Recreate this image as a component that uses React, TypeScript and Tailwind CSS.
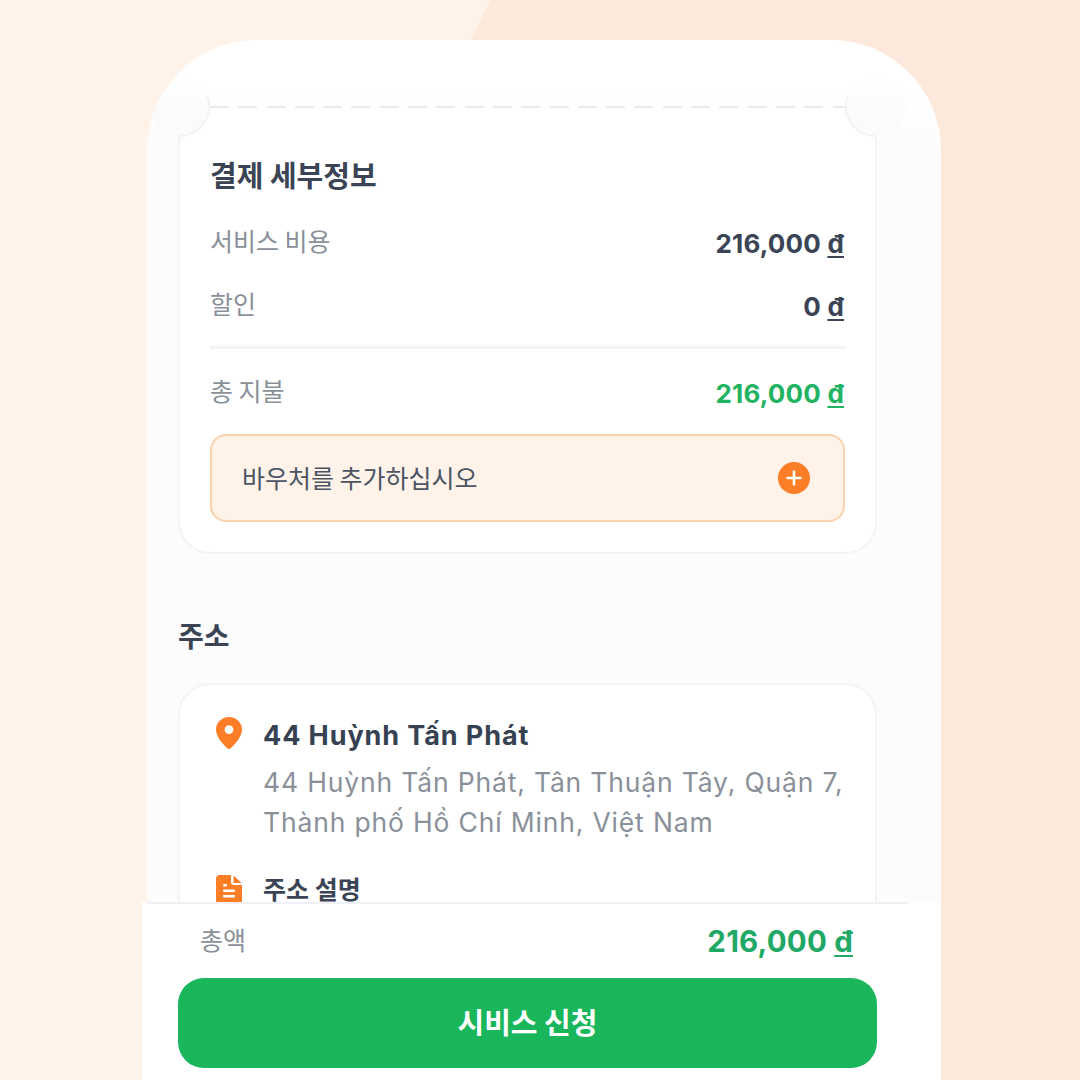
const KR = "font-['Noto_Sans_CJK_KR','Noto_Sans',sans-serif]";
const LAT = "font-['Inter','Noto_Sans_CJK_KR',sans-serif]";

function Money({ value, className }: { value: string; className: string }) {
  return (
    <span className={`${LAT} font-bold whitespace-nowrap tracking-[0.2px] ${className}`}>
      {value} <u className="underline decoration-2 underline-offset-[3px]">đ</u>
    </span>
  );
}

function Row({ label, value, color, className }: { label: string; value: string; color: string; className: string }) {
  return (
    <div className={`flex items-center justify-between ${className}`}>
      <span className="text-[25px] leading-[36px] text-[#8a9099] -translate-y-[1px]">{label}</span>
      <Money value={value} className={`text-[26px] leading-[36px] translate-y-[3px] pr-[1px] ${color}`} />
    </div>
  );
}

function Notch({ id, flip, className }: { id: string; flip: boolean; className: string }) {
  return (
    <svg viewBox="0 0 62 62" className={`absolute w-[62px] h-[62px] ${flip ? "-scale-x-100" : ""} ${className}`}>
      <defs>
        <linearGradient id={id} x1="0" y1="0" x2="0" y2="1">
          <stop offset="0" stopColor="#ffffff" />
          <stop offset="0.6" stopColor="#fafbfc" />
        </linearGradient>
      </defs>
      <circle cx="31" cy="31" r="30" fill={`url(#${id})`} />
      <path d="M59.2 20.7A30 30 0 0 1 31 61" fill="none" stroke="#f1f3f5" strokeWidth="2" />
    </svg>
  );
}

function Pin() {
  return (
    <svg viewBox="0 0 26 32" className="w-[26px] h-[32px] shrink-0">
      <path
        fill="#fd7e27"
        fillRule="evenodd"
        d="M13 0C5.8 0 0 5.6 0 12.6 0 20.5 8 28.2 11.2 31.2c1 .9 2.6.9 3.6 0C18 28.2 26 20.5 26 12.6 26 5.6 20.2 0 13 0Zm0 8.2a4.4 4.4 0 1 1 0 8.8 4.4 4.4 0 0 1 0-8.8Z"
      />
    </svg>
  );
}

function FileIcon() {
  return (
    <svg viewBox="0 0 26 32" className="w-[26px] h-[32px] shrink-0">
      <path fill="#fd7e27" d="M4 0h11v7a3 3 0 0 0 3 3h8v18a4 4 0 0 1-4 4H4a4 4 0 0 1-4-4V4a4 4 0 0 1 4-4Z" />
      <path fill="#fd7e27" d="M17.5 0.5 25.6 8H18a.5.5 0 0 1-.5-.5Z" />
      <rect x="7" y="9" width="4" height="2.4" rx="1" fill="#fff" />
      <rect x="7" y="14.5" width="12" height="2.4" rx="1" fill="#fff" />
      <rect x="7" y="20" width="12" height="2.4" rx="1" fill="#fff" />
    </svg>
  );
}

export default function App() {
  return (
    <div className={`relative w-[1080px] h-[1080px] overflow-hidden bg-[#fff3e9] ${KR}`}>
      <div className="absolute inset-0 bg-[#fde9db] [clip-path:polygon(490px_0,1080px_0,1080px_1080px,300px_1080px,300px_400px)]" />

      <div className="relative ml-[142px] pt-[40px] w-[799px] h-[1080px] flex flex-col">
        <div className="ml-[5px] flex-1 min-h-0 rounded-t-[110px] overflow-hidden pl-[31px] pr-[64px] pt-[66px] bg-gradient-to-b from-white from-[6%] to-[#fcfcfd] to-[12%]">
          <section className="relative h-[448px] bg-white rounded-b-[32px] border-x-2 border-b-2 border-[#f3f4f6] px-[30px]">
            <div className="absolute top-0 left-[30px] right-[30px] h-[2px] bg-[repeating-linear-gradient(90deg,#e8eaee_0,#e8eaee_19px,transparent_19px,transparent_28.3px)]" />
            <Notch id="notch-left" flip={false} className="-top-[31px] -left-[32px]" />
            <Notch id="notch-right" flip={true} className="-top-[31px] -right-[32px]" />

            <h2 className="pt-[48px] text-[29px] leading-[40px] font-bold text-[#3a4455]">결제 세부정보</h2>
            <Row label="서비스 비용" value="216,000" color="text-[#3a4455]" className="mt-[29px]" />
            <Row label="할인" value="0" color="text-[#3a4455]" className="mt-[27px]" />
            <div className="mt-[24px] h-[3px] bg-[#f3f4f6]" />
            <Row label="총 지불" value="216,000" color="text-[#1fb362]" className="mt-[24px]" />
            <div className="mt-[25px] h-[88px] flex items-center justify-between rounded-[16px] border-2 border-[#fad3ae] bg-[#fff3e9] pl-[30px] pr-[33px]">
              <span className="text-[25px] text-[#4b5563]">바우처를 추가하십시오</span>
              <span className="w-[32px] h-[32px] rounded-full bg-[#fd7e27] flex items-center justify-center">
                <svg viewBox="0 0 16 16" className="w-[16px] h-[16px]">
                  <path d="M8 1.5v13M1.5 8h13" stroke="#fff" strokeWidth="2.6" strokeLinecap="round" />
                </svg>
              </span>
            </div>
          </section>

          <h2 className="mt-[61px] text-[28px] leading-[40px] font-bold text-[#3a4455]">주소</h2>

          <section className="mt-[28px] h-[400px] bg-white rounded-[32px] border-2 border-[#f3f4f6] pl-[36px] pr-[20px] pt-[32px]">
            <div className="flex gap-[21px]">
              <Pin />
              <div className={`${LAT} -mt-[1px]`}>
                <div className="text-[27px] leading-[40px] font-bold tracking-[0.9px] text-[#364152] whitespace-nowrap">44 Huỳnh Tấn Phát</div>
                <div className="mt-[6px] text-[26.5px] leading-[40px] tracking-[0.83px] text-[#8a9099] whitespace-nowrap">
                  44 Huỳnh Tấn Phát, Tân Thuận Tây, Quận 7,
                  <br />
                  Thành phố Hồ Chí Minh, Việt Nam
                </div>
              </div>
            </div>
            <div className="flex gap-[21px] mt-[33px]">
              <FileIcon />
              <span className="-mt-[5px] text-[25px] leading-[36px] font-bold text-[#3a4455]">주소 설명</span>
            </div>
          </section>
        </div>

        <footer className="h-[178px] shrink-0 bg-white">
          <div className="ml-[5px] w-[761px] border-t-2 border-[#eef0f3] pl-[53px] pr-[55px] pt-[19px] flex items-center justify-between">
            <span className="text-[25px] leading-[36px] text-[#8a9099] -translate-y-[4px]">총액</span>
            <Money value="216,000" className="text-[29.5px] leading-[40px] text-[#1fa866] -translate-y-[2px]" />
          </div>
          <div className="ml-[36px] mt-[15px] w-[699px] h-[90px] rounded-[26px] bg-[#19b65b] flex items-center justify-center pb-[2px] text-[29px] font-bold text-white">
            시비스 신청
          </div>
        </footer>
      </div>
    </div>
  );
}
